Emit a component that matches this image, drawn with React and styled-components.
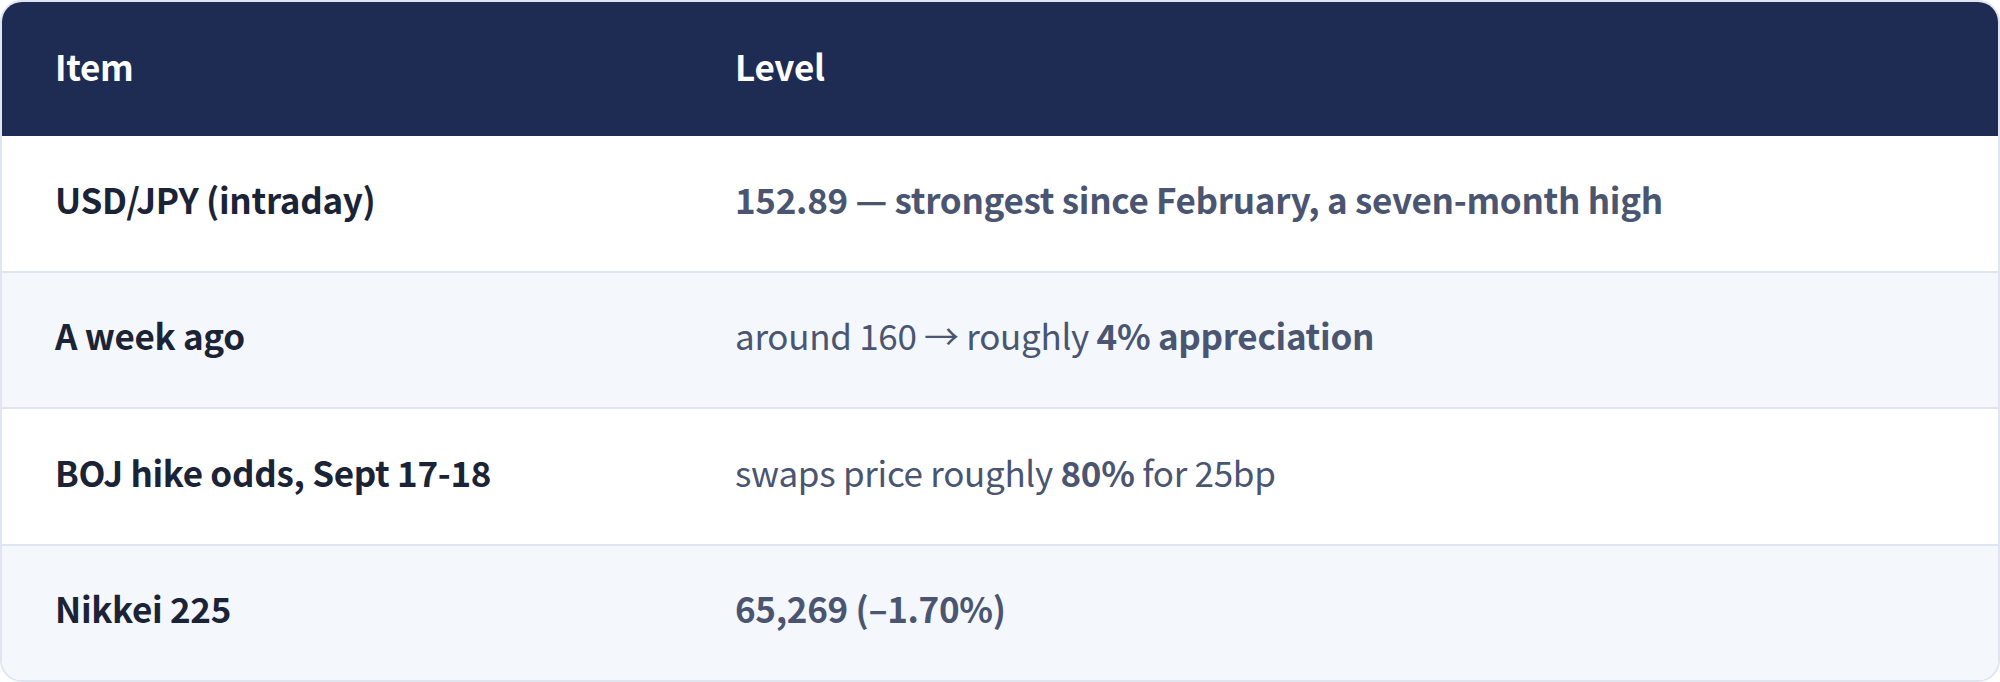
import styled, { createGlobalStyle } from 'styled-components';

const GlobalStyle = createGlobalStyle`
  html, body {
    margin: 0;
    padding: 0;
    background: #ffffff;
  }
  body {
    font-family: "Noto Sans CJK KR", "Noto Sans", sans-serif;
  }
`;

const rows = [
  {
    item: 'USD/JPY (intraday)',
    level: <strong>152.89 — strongest since February, a seven-month high</strong>,
  },
  {
    item: 'A week ago',
    level: (
      <>
        around 160 → roughly <strong>4% appreciation</strong>
      </>
    ),
  },
  {
    item: 'BOJ hike odds, Sept 17-18',
    level: (
      <>
        swaps price roughly <strong>80%</strong> for 25bp
      </>
    ),
  },
  {
    item: 'Nikkei 225',
    level: <strong>65,269 (–1.70%)</strong>,
  },
];

const App = () => {
  return (
    <>
      <GlobalStyle />
      <Table>
        <HeadRow>
          <HeadCell>Item</HeadCell>
          <HeadCell $second>Level</HeadCell>
        </HeadRow>
        {rows.map((row, i) => (
          <Row key={row.item} $alt={i % 2 === 1} $first={i === 0}>
            <ItemCell>{row.item}</ItemCell>
            <LevelCell>{row.level}</LevelCell>
          </Row>
        ))}
      </Table>
    </>
  );
};

const Table = styled.div`
  box-sizing: border-box;
  width: 2000px;
  height: 682px;
  border: 2px solid #dfe5f1;
  border-radius: 22px;
  overflow: hidden;
  display: flex;
  flex-direction: column;
`;

const HeadRow = styled.div`
  display: grid;
  grid-template-columns: 675px 1fr;
  height: 134px;
  flex-shrink: 0;
  background: #1e2b53;
`;

const HeadCell = styled.div`
  display: flex;
  align-items: center;
  padding: 0 0 8px ${(p) => (p.$second ? '58px' : '53px')};
  font-size: 35px;
  letter-spacing: -0.3px;
  font-weight: 700;
  color: #ffffff;
`;

const Row = styled.div`
  display: grid;
  grid-template-columns: 675px 1fr;
  flex: 1;
  background: ${(p) => (p.$alt ? '#f4f7fc' : '#ffffff')};
  border-top: ${(p) => (p.$first ? 'none' : '2px solid #dfe5f1')};
`;

const ItemCell = styled.div`
  display: flex;
  align-items: center;
  padding: 0 0 10px 53px;
  font-size: 35px;
  letter-spacing: -0.3px;
  font-weight: 700;
  color: #1b2336;
`;

const LevelCell = styled.div`
  display: flex;
  align-items: center;
  white-space: pre;
  padding: 0 0 10px 58px;
  font-size: 35px;
  letter-spacing: -0.3px;
  font-weight: 400;
  color: #4a5571;

  strong {
    font-weight: 700;
  }
`;

export default App;
